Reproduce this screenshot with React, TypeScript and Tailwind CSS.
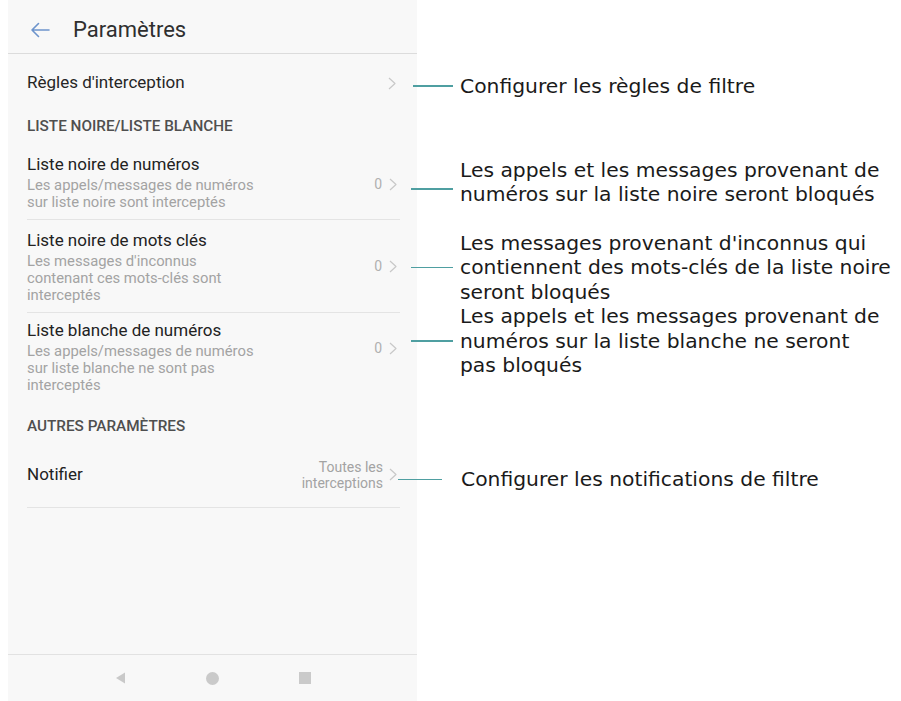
import type { ReactNode } from "react";

const phone = "ml-2 w-[409px] shrink-0 bg-[#f8f8f8]";

function Chevron() {
  return (
    <svg width="8" height="13" viewBox="0 0 8 13" className="shrink-0">
      <polyline
        points="1,1 7,6.5 1,12"
        fill="none"
        stroke="#c8c8c8"
        strokeWidth="1.2"
        strokeLinejoin="round"
      />
    </svg>
  );
}

function Line({ className }: { className: string }) {
  return <div className={`h-[1.5px] shrink-0 bg-[#4f9fa1] ${className}`} />;
}

function Note({ children, className }: { children: ReactNode; className: string }) {
  return (
    <div
      className={`whitespace-nowrap text-[20.3px] text-[#1a1a1a] font-['DejaVu_Sans',sans-serif] ${className}`}
    >
      {children}
    </div>
  );
}

function SectionHeader({ label, className }: { label: string; className: string }) {
  return (
    <div className="flex">
      <div className={`${phone} flex items-center bg-[#ececec] pl-[19px] ${className}`}>
        <span className="text-[15.3px] font-medium text-[#4f4f4f]">{label}</span>
      </div>
    </div>
  );
}

export default function App() {
  return (
    <div className="flex h-[701px] w-[901px] flex-col overflow-hidden bg-white font-['Roboto',sans-serif]">
      {/* Toolbar */}
      <div className="flex">
        <div className={`${phone} flex h-[54px] items-center gap-[23px] border-b border-[#dcdcdc] pl-[22px] pt-[6px]`}>
          <svg width="20" height="16" viewBox="0 0 20 16">
            <path
              d="M19 8H2M8.5 1.5L2 8l6.5 6.5"
              fill="none"
              stroke="#6d94cc"
              strokeWidth="1.6"
              strokeLinecap="round"
              strokeLinejoin="round"
            />
          </svg>
          <span className="text-[22px] text-[#2f2f2f]">Paramètres</span>
        </div>
      </div>

      {/* Règles d'interception */}
      <div className="flex h-[54px]">
        <div className={`${phone} pl-[19px] pr-[17px]`}>
          <div className="flex h-full items-center justify-between pr-[4px] pt-[4px]">
            <span className="text-[17px] text-[#262626]">Règles d'interception</span>
            <Chevron />
          </div>
        </div>
        <div className="-ml-[4px] flex items-center pt-[10px]">
          <Line className="w-[40px]" />
          <Note className="ml-[7px]">Configurer les règles de filtre</Note>
        </div>
      </div>

      <SectionHeader label="LISTE NOIRE/LISTE BLANCHE" className="h-[37px]" />

      {/* Liste noire de numéros */}
      <div className="flex h-[75px]">
        <div className={`${phone} pl-[19px] pr-[17px]`}>
          <div className="flex h-full items-center justify-between border-b border-[#e4e4e4] pr-[3px]">
            <div className="pt-[1px]">
              <div className="text-[17px] leading-[20px] text-[#222]">Liste noire de numéros</div>
              <div className="mt-[3px] whitespace-nowrap text-[14.8px] leading-[17px] text-[#a3a3a3]">
                Les appels/messages de numéros
                <br />
                sur liste noire sont interceptés
              </div>
            </div>
            <div className="flex items-center gap-[7px] pt-[4px]">
              <span className="text-[14px] text-[#b0b0b0]">0</span>
              <Chevron />
            </div>
          </div>
        </div>
        <div className="-ml-[6px] flex">
          <div className="flex items-center pt-[13px]">
            <Line className="w-[42px]" />
          </div>
          <div className="flex items-center">
            <Note className="ml-[7px] leading-[23.5px]">
              Les appels et les messages provenant de
              <br />
              numéros sur la liste noire seront bloqués
            </Note>
          </div>
        </div>
      </div>

      {/* Liste noire de mots clés */}
      <div className="flex h-[93px]">
        <div className={`${phone} pl-[19px] pr-[17px]`}>
          <div className="flex h-full items-center justify-between border-b border-[#e4e4e4] pr-[3px]">
            <div className="pt-[1px]">
              <div className="text-[17px] leading-[20px] text-[#222]">Liste noire de mots clés</div>
              <div className="mt-[3px] whitespace-nowrap text-[14.8px] leading-[17px] text-[#a3a3a3]">
                Les messages d'inconnus
                <br />
                contenant ces mots-clés sont
                <br />
                interceptés
              </div>
            </div>
            <div className="flex items-center gap-[7px]">
              <span className="text-[14px] text-[#b0b0b0]">0</span>
              <Chevron />
            </div>
          </div>
        </div>
        <div className="-ml-[6px] flex items-center pt-[2px]">
          <Line className="w-[42px]" />
          <Note className="ml-[7px] leading-[24.5px]">
            Les messages provenant d'inconnus qui
            <br />
            contiennent des mots-clés de la liste noire
            <br />
            seront bloqués
          </Note>
        </div>
      </div>

      {/* Liste blanche de numéros */}
      <div className="flex h-[90px]">
        <div className={`${phone} pl-[19px] pr-[17px]`}>
          <div className="flex h-full items-center justify-between pr-[3px]">
            <div className="pb-[2px]">
              <div className="text-[17px] leading-[20px] text-[#222]">Liste blanche de numéros</div>
              <div className="mt-[3px] whitespace-nowrap text-[14.8px] leading-[17px] text-[#a3a3a3]">
                Les appels/messages de numéros
                <br />
                sur liste blanche ne sont pas
                <br />
                interceptés
              </div>
            </div>
            <div className="flex items-center gap-[7px] pb-[20px]">
              <span className="text-[14px] text-[#b0b0b0]">0</span>
              <Chevron />
            </div>
          </div>
        </div>
        <div className="-ml-[6px] flex items-center pb-[34px]">
          <Line className="w-[42px]" />
          <Note className="ml-[7px] leading-[24.5px]">
            Les appels et les messages provenant de
            <br />
            numéros sur la liste blanche ne seront
            <br />
            pas bloqués
          </Note>
        </div>
      </div>

      <SectionHeader label="AUTRES PARAMÈTRES" className="h-[37px] pt-[10px]" />

      {/* Notifier */}
      <div className="flex h-[68px]">
        <div className={`${phone} pl-[19px] pr-[17px]`}>
          <div className="flex h-full items-center justify-between border-b border-[#e4e4e4] pr-[3px] pt-[2px]">
            <span className="text-[17px] text-[#222]">Notifier</span>
            <div className="flex items-center gap-[6px]">
              <span className="text-right text-[14px] leading-[16px] text-[#a3a3a3]">
                Toutes les
                <br />
                interceptions
              </span>
              <Chevron />
            </div>
          </div>
        </div>
        <div className="-ml-[19px] flex items-center pt-[11px]">
          <Line className="w-[44px]" />
          <Note className="ml-[19px]">Configurer les notifications de filtre</Note>
        </div>
      </div>

      {/* Empty space */}
      <div className="flex flex-1">
        <div className={`${phone} border-b border-[#e2e2e2]`} />
      </div>

      {/* Navigation bar */}
      <div className="flex">
        <div className={`${phone} flex h-[46px] items-center justify-center`}>
          <div className="flex w-[92px] justify-center">
            <svg width="11" height="12" viewBox="0 0 11 12">
              <polygon points="10,0.5 10,11.5 1,6" fill="#c9c9c9" />
            </svg>
          </div>
          <div className="flex w-[92px] justify-center">
            <div className="h-[13px] w-[13px] rounded-full bg-[#cacaca]" />
          </div>
          <div className="flex w-[92px] justify-center">
            <div className="h-[12px] w-[12px] bg-[#cacaca]" />
          </div>
        </div>
      </div>
    </div>
  );
}
